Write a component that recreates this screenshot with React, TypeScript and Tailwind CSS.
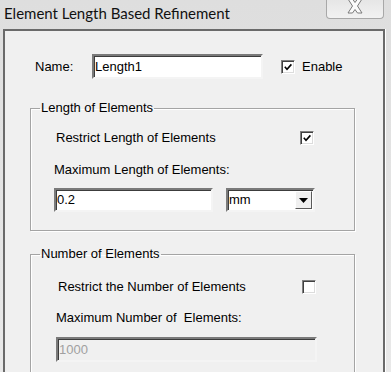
import React from 'react';

const sunken =
  'border-2 border-t-[#7a7a7a] border-l-[#7a7a7a] border-r-[#f4f4f4] border-b-[#f4f4f4] shadow-[inset_1px_1px_0_#3c3c3c]';

function CheckBox({ checked }: { checked?: boolean }) {
  return (
    <div className="w-[14px] h-[14px] bg-white flex items-center justify-center border border-t-[#808080] border-l-[#808080] border-r-white border-b-white shadow-[inset_1px_1px_0_#404040,inset_-1px_-1px_0_#dcdcdc]">
      {checked && (
        <svg width="8" height="8" viewBox="0 0 8 8">
          <path d="M0.8 3.8 L3 6.2 L7.4 1.4" stroke="#000" strokeWidth="1.6" fill="none" />
        </svg>
      )}
    </div>
  );
}

function GroupBox({ title, children, className }: { title: string; children: React.ReactNode; className?: string }) {
  return (
    <fieldset className={`border border-[#a4a4a4] shadow-[1px_1px_0_#ffffff,inset_1px_1px_0_#ffffff] ${className ?? ''}`}>
      <legend className="ml-[9px] px-[1px] leading-[16px]">{title}</legend>
      {children}
    </fieldset>
  );
}

export default function App() {
  return (
    <div
      className="w-[391px] h-[372px] overflow-hidden bg-gradient-to-b from-[#dedede] to-[#e9e9e9] text-black text-[13px] leading-[16px]"
      style={{ fontFamily: '"Liberation Sans", Arial, sans-serif' }}
    >
      {/* title bar */}
      <div className="h-[29px] flex items-start justify-between">
        <div
          className="pl-[4px] pt-[4px] text-[15px] leading-[19px] text-[#111]"
          style={{ fontFamily: 'Lato, "Noto Sans", sans-serif' }}
        >
          Element Length Based Refinement
        </div>
        <div className="mr-[7px] w-[58px] h-[19px] border border-t-0 border-[#a8a8a8] rounded-b-[4px] bg-gradient-to-b from-[#e6e6e6] to-[#f2f2f2] flex justify-center">
          <svg width="18" height="15" viewBox="0 0 18 15" className="-mt-[1px]">
            <path
              d="M2 0 L6.5 0 L9 3.5 L11.5 0 L16 0 L11.5 7 L16 14 L11.5 14 L9 10.5 L6.5 14 L2 14 L6.5 7 Z"
              fill="#fbfbfb"
              stroke="#7b7b7b"
              strokeWidth="1"
              strokeLinejoin="round"
            />
          </svg>
        </div>
      </div>

      {/* dialog body */}
      <div className="ml-[3px] w-[382px] h-[400px] bg-[#f0f0f0] border-2 border-b-0 border-[#6a6a6a] shadow-[1px_0_0_#ffffff]">
        <div className="pt-[23px] pl-[30px] flex items-center">
          <span className="w-[57px]">Name:</span>
          <div className={`w-[171px] h-[25px] bg-white pl-[1px] flex items-center ${sunken}`}>Length1</div>
          <div className="ml-[18px]">
            <CheckBox checked />
          </div>
          <span className="ml-[7px]">Enable</span>
        </div>

        <GroupBox title="Length of Elements" className="mt-[21px] ml-[25px] w-[325px] pb-[18px]">
          <div className="mt-[14px] pl-[25px] flex items-center">
            <span className="w-[244px]">Restrict Length of Elements</span>
            <CheckBox checked />
          </div>
          <div className="mt-[16px] pl-[23px]">Maximum Length of Elements:</div>
          <div className="mt-[10px] pl-[23px] flex">
            <div className={`w-[159px] h-[24px] bg-white pl-[1px] flex items-center ${sunken}`}>0.2</div>
            <div className={`ml-[13px] w-[89px] h-[24px] bg-white flex items-center justify-between ${sunken}`}>
              <span className="pl-[1px]">mm</span>
              <div className="w-[17px] h-[18px] mr-[1px] bg-[#f0f0f0] border border-t-white border-l-white border-r-[#5a5a5a] border-b-[#5a5a5a] flex items-center justify-center">
                <svg width="9" height="5" viewBox="0 0 9 5">
                  <path d="M0 0 L9 0 L4.5 5 Z" fill="#000" />
                </svg>
              </div>
            </div>
          </div>
        </GroupBox>

        <GroupBox title="Number of Elements" className="mt-[15px] ml-[25px] w-[325px] h-[160px]">
          <div className="mt-[17px] pl-[27px] flex items-center">
            <span className="w-[244px]">Restrict the Number of Elements</span>
            <CheckBox />
          </div>
          <div className="mt-[15px] pl-[25px]">Maximum Number of&nbsp; Elements:</div>
          <div className="mt-[11px] pl-[25px]">
            <div className={`w-[261px] h-[25px] bg-[#f0f0f0] text-[#a0a0a0] pl-[1px] flex items-center ${sunken}`}>1000</div>
          </div>
        </GroupBox>
      </div>
    </div>
  );
}
